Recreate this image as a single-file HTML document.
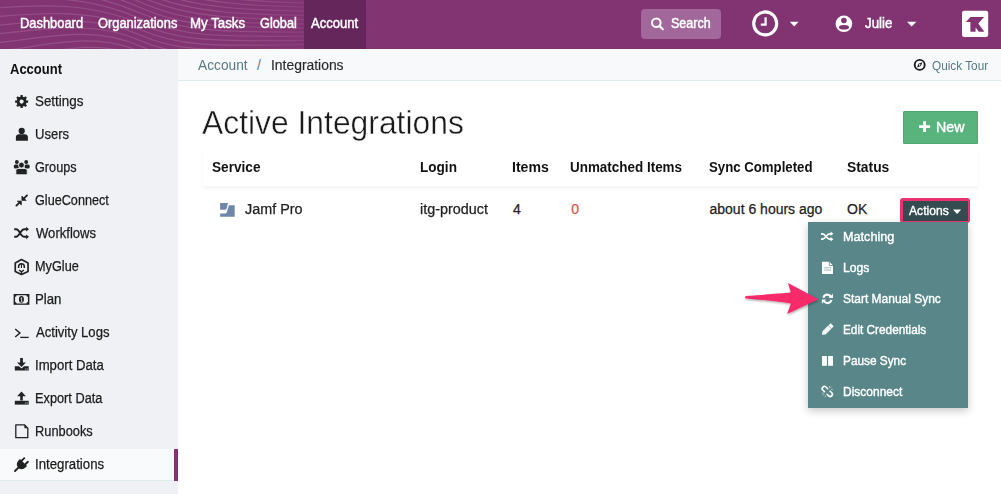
<!DOCTYPE html>
<html><head><meta charset="utf-8">
<style>
*{box-sizing:border-box;margin:0;padding:0}
html,body{width:1001px;height:494px;overflow:hidden;background:#fff;font-family:"Liberation Sans", sans-serif}
.b{position:absolute}
.t{position:absolute;white-space:nowrap;line-height:1}
</style></head><body>
<div class="b" style="left:0;top:0;width:1001px;height:49px;background:#823372;overflow:hidden">
<svg width="1001" height="49" style="position:absolute;left:0;top:0"><g><defs><linearGradient id="wg" gradientUnits="userSpaceOnUse" x1="0" y1="0" x2="380" y2="0"><stop offset="0" stop-color="#fff" stop-opacity="0.14"/><stop offset="0.6" stop-color="#fff" stop-opacity="0.14"/><stop offset="1" stop-color="#fff" stop-opacity="0"/></linearGradient></defs>
<path d="M-10 -69.8 C 40 -73.8, 90 -47.5, 140 -25.5 S 230 4.0, 380 4.0" fill="none" stroke="url(#wg)" stroke-width="1.2"/>
<path d="M-10 -61.1 C 40 -65.1, 90 -42.0, 140 -20.0 S 230 8.0, 380 8.0" fill="none" stroke="url(#wg)" stroke-width="1.2"/>
<path d="M-10 -52.4 C 40 -56.4, 90 -36.5, 140 -14.5 S 230 12.0, 380 12.0" fill="none" stroke="url(#wg)" stroke-width="1.2"/>
<path d="M-10 -43.7 C 40 -47.7, 90 -31.0, 140 -9.0 S 230 16.0, 380 16.0" fill="none" stroke="url(#wg)" stroke-width="1.2"/>
<path d="M-10 -35.0 C 40 -39.0, 90 -25.5, 140 -3.5 S 230 20.0, 380 20.0" fill="none" stroke="url(#wg)" stroke-width="1.2"/>
<path d="M-10 -26.3 C 40 -30.3, 90 -20.0, 140 2.0 S 230 24.0, 380 24.0" fill="none" stroke="url(#wg)" stroke-width="1.2"/>
<path d="M-10 -17.6 C 40 -21.6, 90 -14.5, 140 7.5 S 230 28.0, 380 28.0" fill="none" stroke="url(#wg)" stroke-width="1.2"/>
<path d="M-10 -8.9 C 40 -12.9, 90 -9.0, 140 13.0 S 230 32.0, 380 32.0" fill="none" stroke="url(#wg)" stroke-width="1.2"/>
<path d="M-10 -0.2 C 40 -4.2, 90 -3.5, 140 18.5 S 230 36.0, 380 36.0" fill="none" stroke="url(#wg)" stroke-width="1.2"/>
<path d="M-10 8.5 C 40 4.5, 90 2.0, 140 24.0 S 230 40.0, 380 40.0" fill="none" stroke="url(#wg)" stroke-width="1.2"/>
<path d="M-10 17.2 C 40 13.2, 90 7.5, 140 29.5 S 230 44.0, 380 44.0" fill="none" stroke="url(#wg)" stroke-width="1.2"/>
<path d="M-10 25.9 C 40 21.9, 90 13.0, 140 35.0 S 230 48.0, 380 48.0" fill="none" stroke="url(#wg)" stroke-width="1.2"/>
<path d="M-10 34.6 C 40 30.6, 90 18.5, 140 40.5 S 230 52.0, 380 52.0" fill="none" stroke="url(#wg)" stroke-width="1.2"/>
<path d="M-10 43.3 C 40 39.3, 90 24.0, 140 46.0 S 230 56.0, 380 56.0" fill="none" stroke="url(#wg)" stroke-width="1.2"/>
<path d="M-10 52.0 C 40 48.0, 90 29.5, 140 51.5 S 230 60.0, 380 60.0" fill="none" stroke="url(#wg)" stroke-width="1.2"/>
<path d="M-10 60.7 C 40 56.7, 90 35.0, 140 57.0 S 230 64.0, 380 64.0" fill="none" stroke="url(#wg)" stroke-width="1.2"/></g></svg>
</div>
<div class="b" style="left:304px;top:0;width:62px;height:49px;background:#65275b"></div>
<div class="b" style="left:641px;top:9px;width:80px;height:30px;background:#a2679b;border-radius:4px"></div>
<div class="b" style="left:0;top:49px;width:178px;height:445px;background:#f0f1f4"></div>
<div class="b" style="left:0;top:449px;width:178px;height:32px;background:#f8fafb;border-bottom:1px solid #dcebec"></div>
<div class="b" style="left:174px;top:449px;width:4px;height:32px;background:#823372"></div>
<div class="b" style="left:178px;top:49px;width:823px;height:32px;background:#f8f9fb;border-bottom:1px solid #dcebec"></div>
<div class="b" style="left:903px;top:111px;width:75px;height:33px;background:#58b37d;border:1px solid #4fa872;border-radius:1px"></div>
<div class="b" style="left:203px;top:148px;width:775px;height:38px;background:#fff;box-shadow:0 3px 4px rgba(0,0,0,0.045)"></div>
<div class="b" style="left:900px;top:198px;width:70px;height:25px;background:#e8336e;border-radius:3px"></div>
<div class="b" style="left:902.5px;top:200.5px;width:65px;height:20px;background:#344b50"></div>
<div class="b" style="left:808px;top:222px;width:160px;height:186px;background:#588689;box-shadow:0 3px 8px rgba(0,0,0,0.22)"></div>
<div class="t" style="left:19.58px;top:16.15px;font-size:14px;font-weight:400;color:#fff;transform:scaleX(0.9209);transform-origin:0 0;-webkit-text-stroke:0.45px #fff">Dashboard</div>
<div class="t" style="left:97.50px;top:16.15px;font-size:14px;font-weight:400;color:#fff;transform:scaleX(0.9186);transform-origin:0 0;-webkit-text-stroke:0.45px #fff">Organizations</div>
<div class="t" style="left:190.45px;top:16.15px;font-size:14px;font-weight:400;color:#fff;transform:scaleX(0.9474);transform-origin:0 0;-webkit-text-stroke:0.45px #fff">My Tasks</div>
<div class="t" style="left:260.00px;top:16.15px;font-size:14px;font-weight:400;color:#fff;transform:scaleX(0.9100);transform-origin:0 0;-webkit-text-stroke:0.45px #fff">Global</div>
<div class="t" style="left:311.00px;top:16.15px;font-size:14px;font-weight:400;color:#fff;transform:scaleX(0.9333);transform-origin:0 0;-webkit-text-stroke:0.45px #fff">Account</div>
<div class="t" style="left:671.00px;top:16.15px;font-size:14px;font-weight:400;color:#fff;transform:scaleX(0.8955);transform-origin:0 0;-webkit-text-stroke:0.45px #fff">Search</div>
<div class="t" style="left:864.50px;top:16.15px;font-size:14px;font-weight:400;color:#fff;transform:scaleX(0.9483);transform-origin:0 0;-webkit-text-stroke:0.45px #fff">Julie</div>
<div class="t" style="left:10.00px;top:61.95px;font-size:14px;font-weight:700;color:#111;transform:scaleX(0.9286);transform-origin:0 0;">Account</div>
<div class="t" style="left:34.94px;top:94.15px;font-size:14px;font-weight:400;color:#1c1c1c;transform:scaleX(0.9551);transform-origin:0 0;-webkit-text-stroke:0.25px #1c1c1c">Settings</div>
<div class="t" style="left:34.97px;top:127.15px;font-size:14px;font-weight:400;color:#1c1c1c;transform:scaleX(0.9314);transform-origin:0 0;-webkit-text-stroke:0.25px #1c1c1c">Users</div>
<div class="t" style="left:34.99px;top:160.15px;font-size:14px;font-weight:400;color:#1c1c1c;transform:scaleX(0.9067);transform-origin:0 0;-webkit-text-stroke:0.25px #1c1c1c">Groups</div>
<div class="t" style="left:35.00px;top:193.15px;font-size:14px;font-weight:400;color:#1c1c1c;transform:scaleX(0.9037);transform-origin:0 0;-webkit-text-stroke:0.25px #1c1c1c">GlueConnect</div>
<div class="t" style="left:35.90px;top:226.15px;font-size:14px;font-weight:400;color:#1c1c1c;transform:scaleX(0.9344);transform-origin:0 0;-webkit-text-stroke:0.25px #1c1c1c">Workflows</div>
<div class="t" style="left:34.99px;top:259.15px;font-size:14px;font-weight:400;color:#1c1c1c;transform:scaleX(0.9085);transform-origin:0 0;-webkit-text-stroke:0.25px #1c1c1c">MyGlue</div>
<div class="t" style="left:34.96px;top:292.15px;font-size:14px;font-weight:400;color:#1c1c1c;transform:scaleX(0.9423);transform-origin:0 0;-webkit-text-stroke:0.25px #1c1c1c">Plan</div>
<div class="t" style="left:35.90px;top:325.15px;font-size:14px;font-weight:400;color:#1c1c1c;transform:scaleX(0.9346);transform-origin:0 0;-webkit-text-stroke:0.25px #1c1c1c">Activity Logs</div>
<div class="t" style="left:34.96px;top:358.15px;font-size:14px;font-weight:400;color:#1c1c1c;transform:scaleX(0.9403);transform-origin:0 0;-webkit-text-stroke:0.25px #1c1c1c">Import Data</div>
<div class="t" style="left:34.99px;top:391.15px;font-size:14px;font-weight:400;color:#1c1c1c;transform:scaleX(0.9123);transform-origin:0 0;-webkit-text-stroke:0.25px #1c1c1c">Export Data</div>
<div class="t" style="left:34.98px;top:424.15px;font-size:14px;font-weight:400;color:#1c1c1c;transform:scaleX(0.9161);transform-origin:0 0;-webkit-text-stroke:0.25px #1c1c1c">Runbooks</div>
<div class="t" style="left:34.96px;top:457.15px;font-size:14px;font-weight:400;color:#1c1c1c;transform:scaleX(0.9444);transform-origin:0 0;-webkit-text-stroke:0.25px #1c1c1c">Integrations</div>
<div class="t" style="left:198.30px;top:58.15px;font-size:14px;font-weight:400;color:#5a7a84;transform:scaleX(0.9804);transform-origin:0 0;">Account</div>
<div class="t" style="left:257.00px;top:58.15px;font-size:14px;font-weight:400;color:#5a7a84;">/</div>
<div class="t" style="left:271.31px;top:58.15px;font-size:14px;font-weight:400;color:#2a2a2a;transform:scaleX(0.9917);transform-origin:0 0;-webkit-text-stroke:0.15px #2a2a2a">Integrations</div>
<div class="t" style="left:931.82px;top:59.54px;font-size:12px;font-weight:400;color:#557985;transform:scaleX(0.9821);transform-origin:0 0;">Quick Tour</div>
<div class="t" style="left:201.86px;top:105.42px;font-size:34px;font-weight:400;color:#1a1a1a;transform:scaleX(0.9361);transform-origin:0 0;-webkit-text-stroke:0.45px #fff">Active Integrations</div>
<div class="t" style="left:936.39px;top:120.05px;font-size:14px;font-weight:400;color:#fff;transform:scaleX(1.0148);transform-origin:0 0;-webkit-text-stroke:0.4px #fff">New</div>
<div class="t" style="left:212.33px;top:160.45px;font-size:14px;font-weight:700;color:#111;transform:scaleX(0.9729);transform-origin:0 0;">Service</div>
<div class="t" style="left:420.23px;top:160.45px;font-size:14px;font-weight:700;color:#111;transform:scaleX(0.9694);transform-origin:0 0;">Login</div>
<div class="t" style="left:511.99px;top:160.45px;font-size:14px;font-weight:700;color:#111;transform:scaleX(1.0057);transform-origin:0 0;">Items</div>
<div class="t" style="left:570.24px;top:160.45px;font-size:14px;font-weight:700;color:#111;transform:scaleX(0.9600);transform-origin:0 0;">Unmatched Items</div>
<div class="t" style="left:708.56px;top:160.45px;font-size:14px;font-weight:700;color:#111;transform:scaleX(0.9435);transform-origin:0 0;">Sync Completed</div>
<div class="t" style="left:847.01px;top:160.45px;font-size:14px;font-weight:700;color:#111;transform:scaleX(0.9878);transform-origin:0 0;">Status</div>
<div class="t" style="left:245.00px;top:201.95px;font-size:14px;font-weight:400;color:#222;transform:scaleX(1.0268);transform-origin:0 0;-webkit-text-stroke:0.25px #222">Jamf Pro</div>
<div class="t" style="left:420.17px;top:201.95px;font-size:14px;font-weight:400;color:#222;transform:scaleX(1.0277);transform-origin:0 0;-webkit-text-stroke:0.25px #222">itg-product</div>
<div class="t" style="left:513.00px;top:201.95px;font-size:14px;font-weight:400;color:#222;-webkit-text-stroke:0.25px #222">4</div>
<div class="t" style="left:571.20px;top:201.95px;font-size:14px;font-weight:400;color:#d9534f;-webkit-text-stroke:0.25px #d9534f">0</div>
<div class="t" style="left:709.50px;top:201.95px;font-size:14px;font-weight:400;color:#222;-webkit-text-stroke:0.25px #222">about 6 hours ago</div>
<div class="t" style="left:847.00px;top:201.95px;font-size:14px;font-weight:400;color:#222;-webkit-text-stroke:0.25px #222">OK</div>
<div class="t" style="left:909.30px;top:204.30px;font-size:13px;font-weight:400;color:#fff;transform:scaleX(0.9326);transform-origin:0 0;-webkit-text-stroke:0.4px #fff">Actions</div>
<div class="t" style="left:842.53px;top:229.80px;font-size:13px;font-weight:400;color:#fff;transform:scaleX(0.9725);transform-origin:0 0;-webkit-text-stroke:0.4px #fff">Matching</div>
<div class="t" style="left:842.56px;top:260.80px;font-size:13px;font-weight:400;color:#fff;transform:scaleX(0.9370);transform-origin:0 0;-webkit-text-stroke:0.4px #fff">Logs</div>
<div class="t" style="left:842.58px;top:291.80px;font-size:13px;font-weight:400;color:#fff;transform:scaleX(0.9210);transform-origin:0 0;-webkit-text-stroke:0.4px #fff">Start Manual Sync</div>
<div class="t" style="left:842.59px;top:322.80px;font-size:13px;font-weight:400;color:#fff;transform:scaleX(0.9066);transform-origin:0 0;-webkit-text-stroke:0.4px #fff">Edit Credentials</div>
<div class="t" style="left:842.59px;top:353.80px;font-size:13px;font-weight:400;color:#fff;transform:scaleX(0.9088);transform-origin:0 0;-webkit-text-stroke:0.4px #fff">Pause Sync</div>
<div class="t" style="left:842.58px;top:384.80px;font-size:13px;font-weight:400;color:#fff;transform:scaleX(0.9219);transform-origin:0 0;-webkit-text-stroke:0.4px #fff">Disconnect</div>
<svg width="1001" height="494" style="position:absolute;left:0;top:0">
<defs><filter id="sh" x="-20%" y="-50%" width="140%" height="200%"><feDropShadow dx="0.8" dy="1.2" stdDeviation="1" flood-color="#000" flood-opacity="0.35"/></filter></defs>
<circle cx="656.3" cy="22.8" r="4.3" fill="none" stroke="#fff" stroke-width="2"/>
<line x1="659.6" y1="26.1" x2="662.8" y2="29.3" stroke="#fff" stroke-width="2.2" stroke-linecap="round"/>
<circle cx="765.2" cy="23.4" r="11.5" fill="none" stroke="#fff" stroke-width="3.1"/>
<path d="M765.6 17.3 V24.6 H760.8" fill="none" stroke="#fff" stroke-width="2.2"/>
<path d="M789.8 21.8 H798.6 L794.2 26.4Z" fill="#fff"/>
<circle cx="843.9" cy="23.8" r="8.3" fill="#fff"/>
<circle cx="843.9" cy="20.5" r="2.8" fill="#823372"/>
<ellipse cx="844" cy="27.2" rx="5" ry="2.3" fill="#823372"/>
<path d="M907 21.8 H916.4 L911.7 26.5Z" fill="#fff"/>
<rect x="962" y="10.8" width="26.2" height="26.2" rx="2.2" fill="#fff"/>
<path d="M965.9 21.9 L970.4 17.1 H984.1 L978.3 23.6 L984.3 31.7 H978.9 L975.6 27.4 V31.7 H970.4 V21.9Z" fill="#823372"/>
<path d="M20.39 96.73 L20.52 95.09 L22.68 95.09 L22.81 96.73 L24.19 97.30 L25.44 96.23 L26.97 97.76 L25.90 99.01 L26.47 100.39 L28.11 100.52 L28.11 102.68 L26.47 102.81 L25.90 104.19 L26.97 105.44 L25.44 106.97 L24.19 105.90 L22.81 106.47 L22.68 108.11 L20.52 108.11 L20.39 106.47 L19.01 105.90 L17.76 106.97 L16.23 105.44 L17.30 104.19 L16.73 102.81 L15.09 102.68 L15.09 100.52 L16.73 100.39 L17.30 99.01 L16.23 97.76 L17.76 96.23 L19.01 97.30Z M23.70 101.60 A2.1 2.1 0 1 0 19.50 101.60 A2.1 2.1 0 1 0 23.70 101.60Z" fill="#222" fill-rule="evenodd"/>
<circle cx="21.7" cy="130.9" r="3.1" fill="#222"/><path d="M15.9 140.7 V137.3 Q15.9 134.2 19.2 134.2 H24.6 Q27.9 134.2 27.9 137.3 V140.7Z" fill="#222"/>
<circle cx="16.85" cy="162" r="1.95" fill="#222"/><circle cx="26.2" cy="162" r="1.95" fill="#222"/>
<rect x="13.8" y="164.4" width="5" height="4.1" rx="1.6" fill="#222"/><rect x="24.6" y="164.4" width="5.1" height="4.1" rx="1.6" fill="#222"/>
<circle cx="21.45" cy="165.1" r="2.9" fill="#222" stroke="#f0f1f4" stroke-width="0.8"/><path d="M15.9 174.7 V170.6 Q15.9 168.5 18 168.5 H25.1 Q27.2 168.5 27.2 170.6 V174.7Z" fill="#222" stroke="#f0f1f4" stroke-width="0.8"/>
<path d="M27 195.4 L23.2 199.2 M16.4 205.6 L20.2 201.8" stroke="#222" stroke-width="1.9" stroke-linecap="round"/>
<path d="M21.9 196.1 V200.4 H26.2Z M21.35 205 V201.1 H17.3Z" fill="#222" stroke="#222" stroke-width="0.7" stroke-linejoin="round"/>
<path d="M14.2 229.2 H16.2 C19.4 229.2 20.8 236.8 24.2 236.8 H26.6 M14.2 236.8 H16.2 C19.4 236.8 20.8 229.2 24.2 229.2 H26.6" fill="none" stroke="#222" stroke-width="1.9"/>
<path d="M26.1 226.8 L29 229.2 L26.1 231.6Z M26.1 234.4 L29 236.8 L26.1 239.2Z" fill="#222"/>
<path d="M21.5 259.5 L28.05 262.9 V271.5 L21.5 274.5 L15.25 271.5 V262.9Z" fill="none" stroke="#222" stroke-width="1.7" stroke-linejoin="round"/>
<path d="M18.6 268 V266.7 A2.85 2.85 0 0 1 24.3 266.7 V268" fill="none" stroke="#222" stroke-width="1.5"/><path d="M21.45 264 V268" stroke="#222" stroke-width="1.1"/>
<path d="M19 270 L21.45 271.8 L23.9 270 M21.45 271.8 V274.5" fill="none" stroke="#222" stroke-width="1.4"/>
<rect x="13.6" y="294" width="15.8" height="10.8" fill="#222"/><path d="M16.6 295.3 H26.4 A1.5 1.5 0 0 0 27.9 296.8 V302 A1.5 1.5 0 0 0 26.4 303.5 H16.6 A1.5 1.5 0 0 0 15.1 302 V296.8 A1.5 1.5 0 0 0 16.6 295.3Z" fill="#f0f1f4"/><ellipse cx="21.4" cy="299.4" rx="2.5" ry="3.3" fill="#222"/><path d="M20.7 298.4 L21.6 297.7 V301.2 M20.8 301.3 H22.4" stroke="#f0f1f4" stroke-width="0.8" fill="none"/>
<path d="M15.2 329 L19.9 333 L15.2 337" fill="none" stroke="#222" stroke-width="1.5"/><path d="M20.2 337.4 H28.7" stroke="#222" stroke-width="1.3"/>
<path d="M20.1 358 H22.9 V362.6 H25.9 L21.5 367 L17.1 362.6 H20.1Z" fill="#222"/><path d="M14.8 366.2 H19 L21.5 368.6 L24 366.2 H28.7 V370.6 H14.8Z" fill="#222"/><rect x="25.2" y="368.6" width="0.9" height="0.9" fill="#f0f1f4"/><rect x="26.8" y="368.6" width="0.9" height="0.9" fill="#f0f1f4"/>
<path d="M21.5 391.6 L25.9 396.2 H22.8 V400.6 H20.2 V396.2 H17.1Z" fill="#222"/><path d="M14.8 400.8 H28.7 V404.6 H14.8Z" fill="#222"/><rect x="25.2" y="402.6" width="0.9" height="0.9" fill="#f0f1f4"/><rect x="26.8" y="402.6" width="0.9" height="0.9" fill="#f0f1f4"/>
<path d="M15.8 424.8 H24.4 L27.8 428.2 V437.7 H15.8Z" fill="none" stroke="#222" stroke-width="1.3" stroke-linejoin="round"/><path d="M24.4 424.8 V428.2 H27.8Z" fill="#222"/>
<g transform="rotate(45 21.4 464.5)"><rect x="18" y="457" width="1.9" height="5.5" rx="0.95" fill="#222"/><rect x="23.1" y="457" width="1.9" height="5.5" rx="0.95" fill="#222"/><path d="M16.5 461.6 H26.5 V463.4 C26.5 466.6 24.6 468.6 22.4 469 V469.6 H20.6 V469 C18.4 468.6 16.5 466.6 16.5 463.4Z" fill="#222"/><rect x="20.55" y="468.6" width="1.9" height="6" fill="#222" rx="0.95"/></g>
<circle cx="919.7" cy="64.9" r="5" fill="none" stroke="#1c1c1c" stroke-width="1.9"/>
<path d="M922.4 62.2 L920.9 66.1 L917 67.6 L918.5 63.7Z" fill="#1c1c1c"/><circle cx="919.7" cy="64.9" r="0.8" fill="#f8f9fb"/>
<path d="M924.55 121.2 V131.9 M919 126.55 H930.1" stroke="#fff" stroke-width="2.8"/>
<path d="M220.1 202.9 H227.9 L226.7 208.3 Q226.3 209.7 225 209.7 H220.1Z" fill="#6f87ab"/>
<path d="M229.6 205.3 H234.7 V216.7 H220.1 V213.6 H225.1 Q226.4 213.6 226.8 212.3 L228.5 206.4 Q228.8 205.3 229.6 205.3Z" fill="#6f87ab"/>
<path d="M953 209.6 H961.2 L957.1 213.9Z" fill="#fff"/>
<path d="M821 233.8 H822.6 C825.4 233.8 826.6 239.2 829.4 239.2 H831.2 M821 239.2 H822.6 C825.4 239.2 826.6 233.8 829.4 233.8 H831.2" fill="none" stroke="#fff" stroke-width="1.7"/>
<path d="M830.6 231.5 L833.4 233.8 L830.6 236.1Z M830.6 236.9 L833.4 239.2 L830.6 241.5Z" fill="#fff"/>
<path d="M822 261.8 H829.3 L833 265.5 V273.9 H822Z" fill="#fff"/><path d="M829.3 261.8 V265.5 H833" fill="none" stroke="#588689" stroke-width="0.8"/><path d="M824 267.8 H831 M824 270 H831" stroke="#9fb9bb" stroke-width="1"/>
<path d="M823.4 297.8 A3.95 3.95 0 0 1 830.8 296.8 M831.4 299.9 A3.95 3.95 0 0 1 824 300.9" fill="none" stroke="#fff" stroke-width="2.1"/>
<path d="M832.9 293.8 V298 H828.7Z M821.9 303.8 V299.6 H826.1Z" fill="#fff"/>
<g transform="rotate(-45 827 329.9)"><path d="M820 329.9 L822.8 327.7 H833.6 Q834.4 327.7 834.4 328.5 V331.3 Q834.4 332.1 833.6 332.1 H822.8Z" fill="#fff"/><path d="M831 327.5 V332.3" stroke="#588689" stroke-width="0.6"/><path d="M822.4 328.9 H830 M821.8 330.9 H830" stroke="#588689" stroke-width="0.35" stroke-dasharray="0.8 0.8"/></g>
<rect x="822" y="356" width="4.9" height="9.8" fill="#fff"/><rect x="828.1" y="356" width="4.9" height="9.8" fill="#fff"/>
<path d="M827.6 388.6 L826 387 A2.2 2.2 0 0 0 822.9 387 A2.2 2.2 0 0 0 822.9 390.1 L824.5 391.7" fill="none" stroke="#fff" stroke-width="1.6" stroke-linecap="round"/><path d="M830.1 391.2 L831.7 392.8 A2.2 2.2 0 0 1 831.7 395.9 A2.2 2.2 0 0 1 828.6 395.9 L827 394.3" fill="none" stroke="#fff" stroke-width="1.6" stroke-linecap="round"/>
<path d="M829.5 386 V387.8 M831.6 386.6 L830.5 387.7 M830.9 389.4 H832.9 M822 393.2 H823.9 M822.8 395.6 L824 394.4 M825.3 395.4 V397.2" stroke="#fff" stroke-opacity="0.6" stroke-width="0.9"/>
<g filter="url(#sh)"><path d="M745.6 296.1 C760 294.9 778 293.8 790.8 292.6 L788 283.1 L818.3 299.2 L787.1 313.9 L790.9 303.5 C778 301.6 760 299.8 745.6 298.6 Q744.6 297.35 745.6 296.1Z" fill="#f8296b"/></g>
</svg>
</body></html>
